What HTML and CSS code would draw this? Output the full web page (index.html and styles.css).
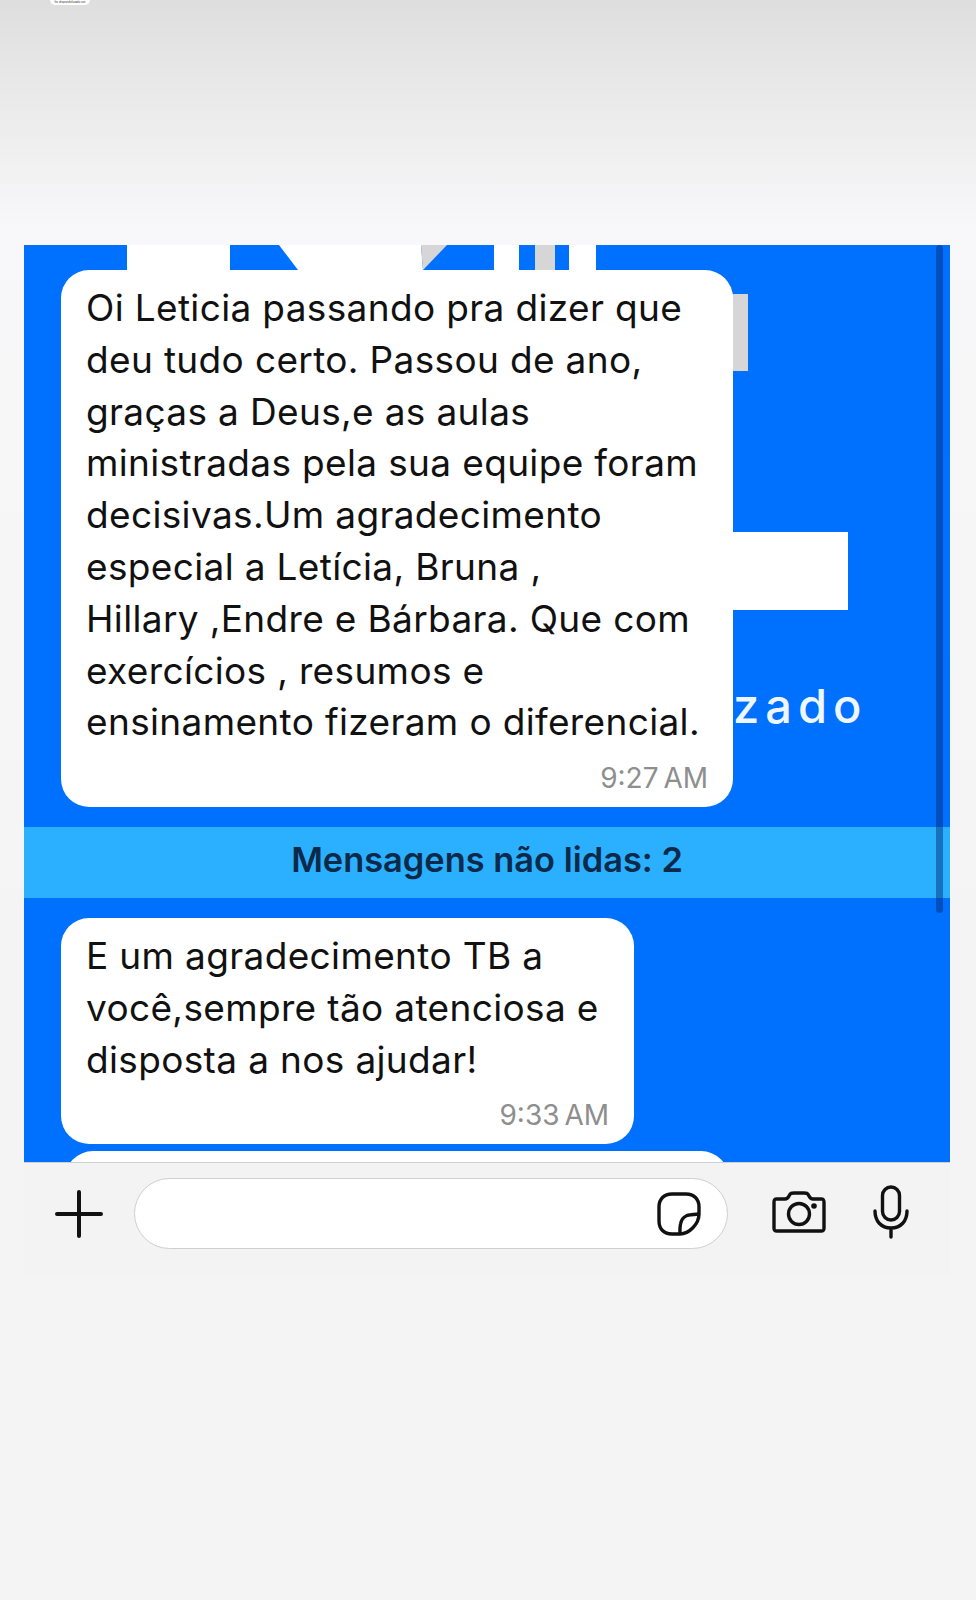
FILE: index.html
```html
<!DOCTYPE html>
<html lang="pt-BR">
<head>
    <meta charset="UTF-8">
    <meta name="viewport" content="width=device-width, initial-scale=1.0">
    <title>Mensagens</title>
    <link rel="stylesheet" href="styles.css">
</head>
<body>
    <div class="top-area">
        <div class="top-pill">foi disponibilizado um</div>
    </div>

    <div class="chat">
        <!-- logo da conversa, fica atras dos baloes -->
        <svg class="wallpaper" width="926" height="917" viewBox="0 0 926 917">
            <rect x="103" y="0" width="103" height="25" fill="#fff"/>
            <path d="M255 0H397L399 25H274Z" fill="#fff"/>
            <path d="M397 0H423L399 25Z" fill="#d6d6d6"/>
            <rect x="470" y="0" width="25" height="25" fill="#fff"/>
            <rect x="511" y="0" width="20" height="25" fill="#d6d6d6"/>
            <rect x="545" y="0" width="27" height="25" fill="#fff"/>
            <rect x="700" y="49" width="24" height="77" fill="#d6d6d6"/>
            <rect x="700" y="287" width="124" height="78" fill="#fff"/>
        </svg>
        <div class="wallpaper-text">zado</div>
        <div class="scrollbar"></div>

        <div class="messages">
            <div class="bubble bubble-first">
                <p>Oi Leticia passando pra dizer que<br>deu tudo certo. Passou de ano,<br>graças a Deus,e as aulas<br>ministradas pela sua equipe foram<br>decisivas.Um agradecimento<br>especial a Letícia, Bruna ,<br>Hillary ,Endre e Bárbara. Que com<br>exercícios , resumos e<br>ensinamento fizeram o diferencial.</p>
                <div class="time">9:27 AM</div>
            </div>
            <div class="unread">Mensagens não lidas: 2</div>
            <div class="bubble bubble-second">
                <p>E um agradecimento TB a<br>você,sempre tão atenciosa e<br>disposta a nos ajudar!</p>
                <div class="time">9:33 AM</div>
            </div>
            <div class="bubble bubble-third"></div>
        </div>
    </div>

    <div class="input-bar">
        <svg class="icon-plus" width="48" height="48" viewBox="0 0 48 48">
            <path d="M24 2V46M2 24H46" fill="none" stroke="#111" stroke-width="4" stroke-linecap="round"/>
        </svg>
        <div class="input-box">
            <svg width="44" height="44" viewBox="0 0 44 44">
                <path d="M15 2H29C37 2 42 7 42 15V22C42 32 32 42 23 42H15C7 42 2 37 2 29V15C2 7 7 2 15 2Z" fill="none" stroke="#111" stroke-width="3.400"/>
                <path d="M23 42C23 40 22.500 37 23.500 32C24.500 26 29 23 34 22.800L42 22" fill="none" stroke="#111" stroke-width="3.400"/>
            </svg>
        </div>
        <svg class="icon-camera" width="54" height="42" viewBox="0 0 54 42">
            <path d="M5 8H13C15 8 16 7 17 5C18.500 2 19.500 2 22 2H32C34.500 2 35.500 2 37 5C38 7 39 8 41 8H49C51.500 8 52 9 52 11.500V37C52 39.500 51.500 40 49 40H5C2.500 40 2 39.500 2 37V11.500C2 9 2.500 8 5 8Z" fill="none" stroke="#111" stroke-width="3.400"/>
            <circle cx="27" cy="23" r="10.500" fill="none" stroke="#111" stroke-width="3.400"/>
            <circle cx="42" cy="15" r="2.800" fill="#111"/>
        </svg>
        <svg class="icon-mic" width="36" height="54" viewBox="0 0 36 54">
            <rect x="9.500" y="2" width="17" height="33" rx="8.500" fill="none" stroke="#111" stroke-width="3.400"/>
            <path d="M2 26C2 36 8 43 18 43C28 43 34 36 34 26M18 43V52" fill="none" stroke="#111" stroke-width="3.400" stroke-linecap="round"/>
        </svg>
    </div>
</body>
</html>
```

FILE: styles.css
```css
body {
    margin: 0;
    font-family: 'Inter', 'Liberation Sans', sans-serif;
    background: linear-gradient(180deg, #dedede 0, #e9e9e9 90px, #f8f8fa 230px, #f7f7f8 400px, #f4f4f5 1000px);
    min-height: 1600px;
}

p {
    margin: 0;
}

.top-area {
    height: 245px;
}

.top-pill {
    width: 40px;
    height: 5px;
    margin-left: 50px;
    background-color: #fff;
    border-radius: 0 0 8px 8px;
    color: #333;
    font-size: 3px;
    line-height: 4px;
    text-align: center;
    white-space: nowrap;
    overflow: hidden;
}

.chat {
    position: relative;
    width: 926px;
    height: 917px;
    margin-left: 24px;
    background-color: #0070ff;
    overflow: hidden;
}

.wallpaper {
    position: absolute;
    top: 0;
    left: 0;
}

.wallpaper-text {
    position: absolute;
    top: 432px;
    left: 709px;
    color: #eef7ff;
    font-size: 47px;
    font-weight: 500;
    letter-spacing: 6px;
}

.scrollbar {
    position: absolute;
    top: 0;
    left: 912px;
    width: 7px;
    height: 668px;
    border-radius: 4px;
    background-color: rgba(0, 40, 110, 0.45);
    z-index: 2;
}

.messages {
    position: relative;
    padding-top: 25px;
}

.bubble {
    box-sizing: border-box;
    margin-left: 37px;
    padding: 12px 25px 0;
    background-color: #fff;
    border-radius: 28px;
    color: #111;
    font-size: 37px;
    letter-spacing: 0.350px;
    line-height: 51.800px;
}

.bubble-first {
    width: 672px;
    height: 537px;
}

.bubble-second {
    width: 573px;
    height: 226px;
}

.bubble-third {
    width: 664px;
    height: 60px;
    margin-top: 7px;
    margin-left: 41px;
}

.time {
    margin-top: 8px;
    color: #8e8e8e;
    font-size: 28px;
    letter-spacing: 0;
    word-spacing: -3px;
    line-height: 44px;
    text-align: right;
}

.unread {
    height: 71px;
    margin: 20px 0;
    background-color: #2bb0ff;
    color: #0b2a4a;
    font-size: 34.400px;
    font-weight: 600;
    line-height: 66px;
    text-align: center;
}

.input-bar {
    display: flex;
    align-items: center;
    box-sizing: border-box;
    width: 926px;
    height: 113px;
    margin-left: 24px;
    padding: 0 40px 11px 31px;
    background-color: #f3f3f3;
    border-top: 1px solid #cfcfcf;
}

.input-box {
    display: flex;
    align-items: center;
    justify-content: flex-end;
    box-sizing: border-box;
    width: 594px;
    height: 71px;
    margin-left: 31px;
    padding-right: 26px;
    background-color: #fff;
    border: 1px solid #cfcfcf;
    border-radius: 36px;
}

.icon-camera {
    margin-left: 44px;
    margin-bottom: 4px;
}

.icon-mic {
    margin-left: 47px;
    margin-bottom: 4px;
}
```
